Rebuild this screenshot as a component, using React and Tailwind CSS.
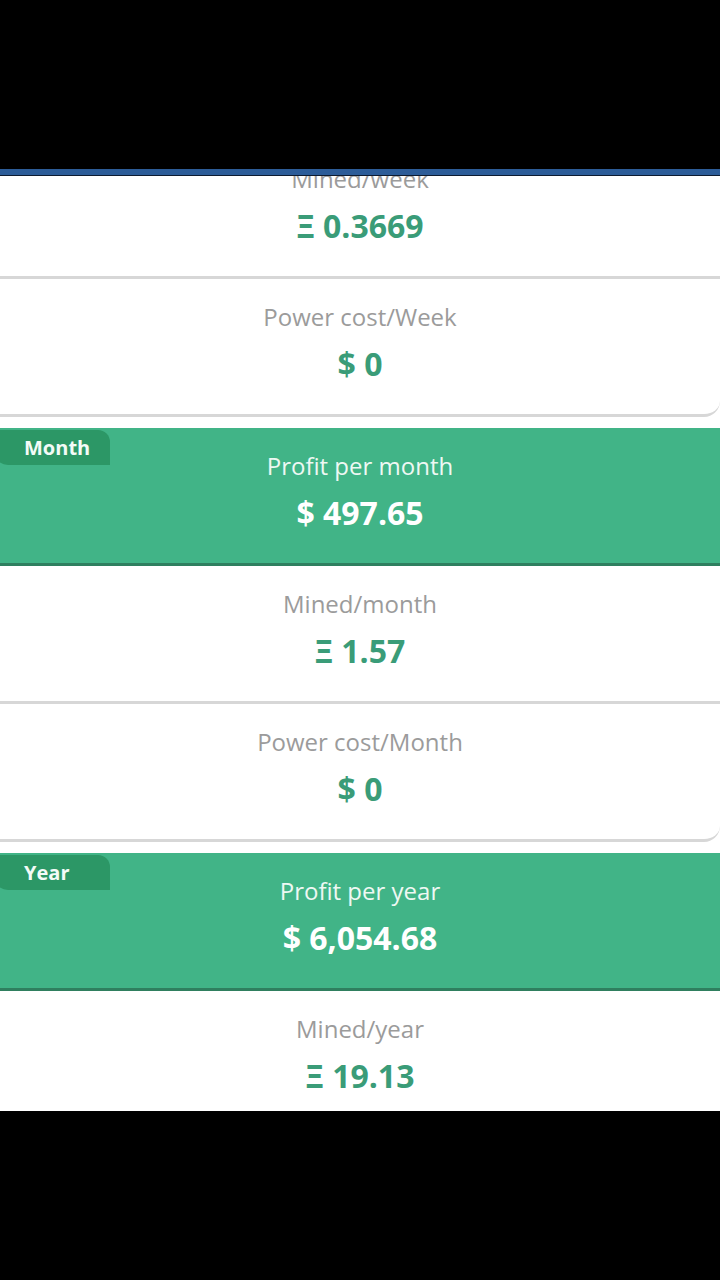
import React from "react";

const font = { fontFamily: '"Open Sans", "Noto Sans", sans-serif' };

const StatCard = ({ label, value, rounded }) => (
  <div
    className={`h-[138px] bg-white border-b-[3px] border-[#d7d7d7] flex flex-col items-center pt-[23px] ${
      rounded ? "rounded-br-2xl" : ""
    }`}
  >
    <p className="text-[24px] leading-[30px] text-[#9b9b9b]">{label}</p>
    <p className="mt-[12px] text-[32px] leading-[40px] font-bold text-[#3a9c78]">
      {value}
    </p>
  </div>
);

const ProfitCard = ({ tab, label, value }) => (
  <div className="relative h-[138px] bg-[#41b487] border-b-[3px] border-[#2f7f5f] flex flex-col items-center pt-[23px]">
    <div className="absolute top-[2px] left-[-6px] w-[116px] h-[35px] bg-[#2c9766] rounded-tr-[12px] rounded-bl-[14px] flex items-center pl-[30px]">
      <span className="text-[20px] font-bold text-[#f3fbf7]">{tab}</span>
    </div>
    <p className="text-[24px] leading-[30px] text-[#eef8f3]">{label}</p>
    <p className="mt-[12px] text-[32px] leading-[40px] font-bold text-white">
      {value}
    </p>
  </div>
);

export default function App() {
  return (
    <div className="h-[1280px] bg-black flex flex-col" style={font}>
      <div className="h-[169px]" />
      <div className="h-[6px] bg-[#2c5c98]" />
      <div className="h-px bg-[#0d1b30]" />
      <div className="h-[935px] bg-white overflow-hidden">
        <div className="-mt-[35px]">
          {/* Week */}
          <StatCard label="Mined/week" value="Ξ 0.3669" />
          <StatCard label="Power cost/Week" value="$ 0" rounded />
          <div className="h-[11px]" />

          {/* Month */}
          <ProfitCard tab="Month" label="Profit per month" value="$ 497.65" />
          <StatCard label="Mined/month" value="Ξ 1.57" />
          <StatCard label="Power cost/Month" value="$ 0" rounded />
          <div className="h-[11px]" />

          {/* Year */}
          <ProfitCard tab="Year" label="Profit per year" value="$ 6,054.68" />
          <StatCard label="Mined/year" value="Ξ 19.13" />
        </div>
      </div>
    </div>
  );
}
